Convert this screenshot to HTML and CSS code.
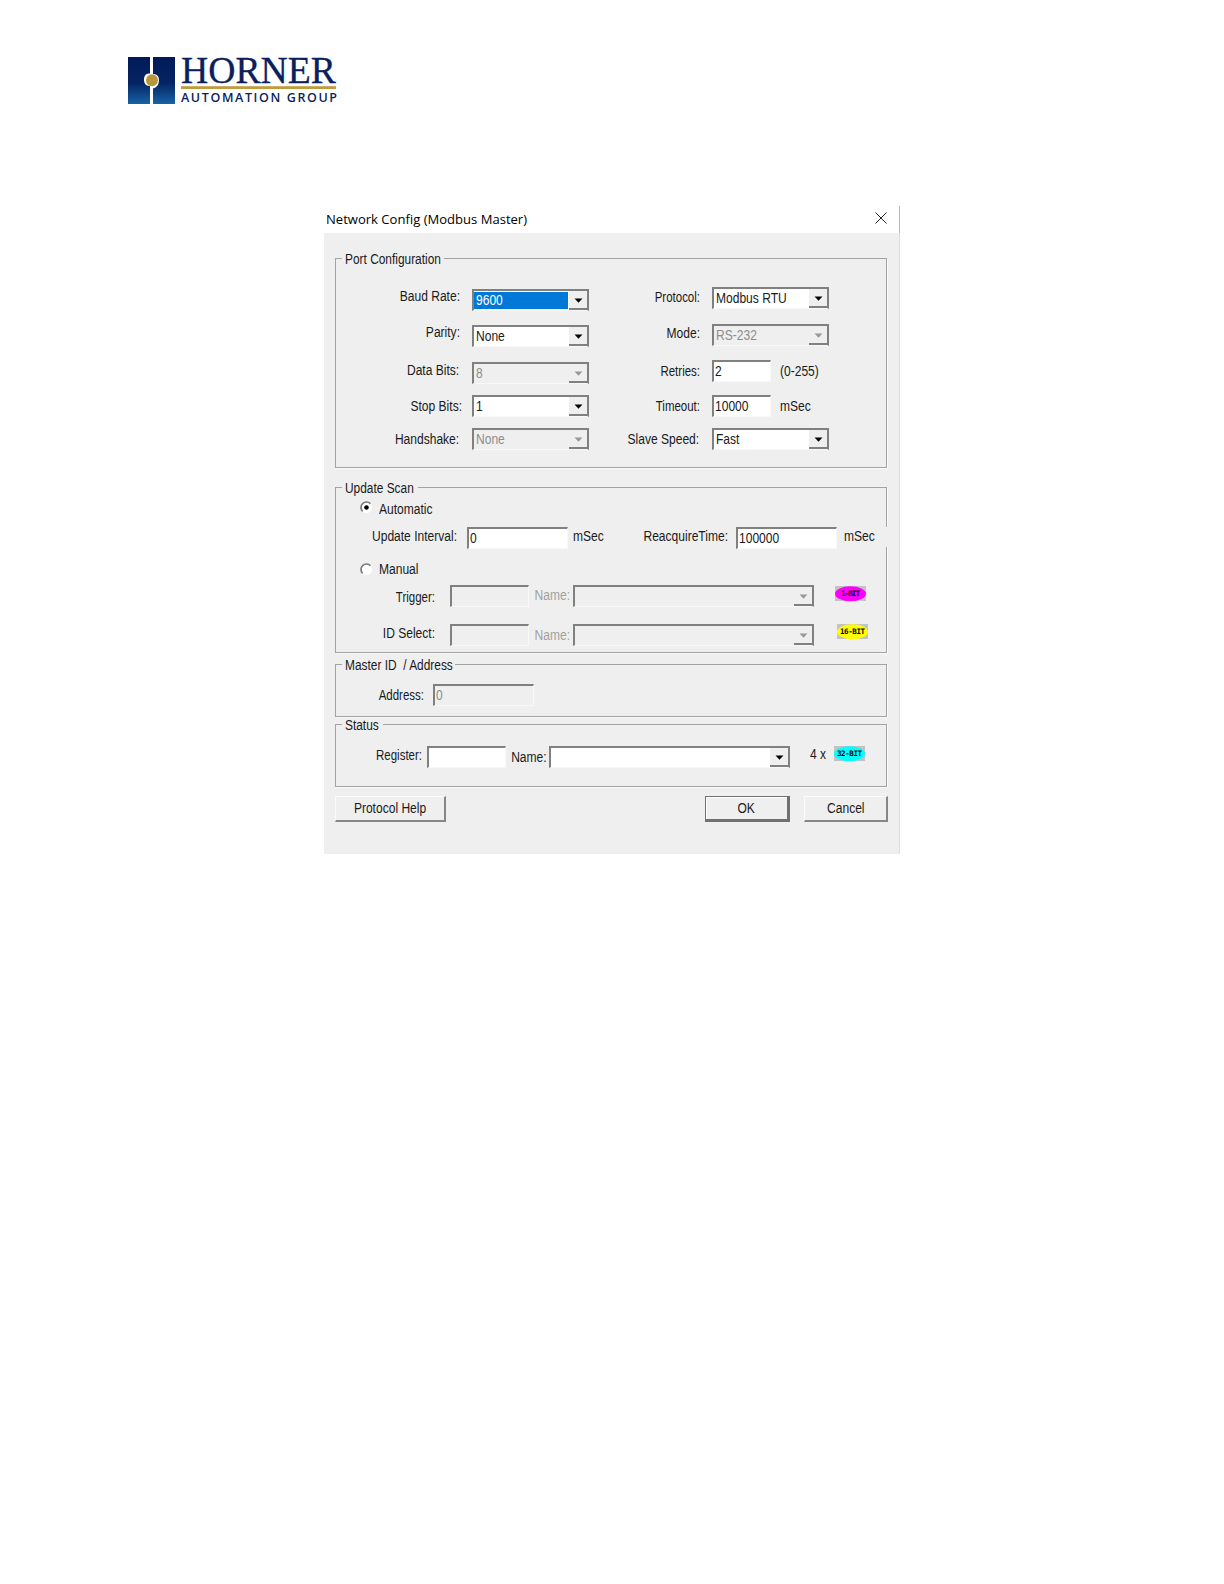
FILE: index.html
```
<!DOCTYPE html>
<html lang="en">

<head>
  <meta charset="UTF-8" />
  <meta name="viewport" content="width=device-width, initial-scale=1.0" />
  <title>Network Config (Modbus Master)</title>
  <link rel="stylesheet" href="styles.css">
</head>

<body>
  <svg width="0" height="0" class="defs">
    <symbol id="arrow" viewBox="0 0 9 5"><path d="M0.5 0.5h8L4.5 4.8z" fill="currentColor" /></symbol>
  </svg>

  <header class="page-header">
    <svg class="logo" viewBox="0 -10 212 60" width="212" height="60">
      <defs>
        <linearGradient id="navy" x1="0" y1="0" x2="0" y2="1">
          <stop offset="0" stop-color="#001a58" />
          <stop offset="0.55" stop-color="#052463" />
          <stop offset="1" stop-color="#1763a6" />
        </linearGradient>
      </defs>
      <rect x="0" y="0" width="22" height="47" fill="url(#navy)" />
      <rect x="25" y="0" width="22" height="47" fill="url(#navy)" />
      <path d="M20 16.5Q15.5 18 16 23.5T22 29V16.5z" fill="#fff" />
      <path d="M26 17Q31.5 18 31 24T25 31.5V17z" fill="#fff" />
      <circle cx="24" cy="23.2" r="6" fill="#b8963e" />
      <text x="53" y="25.8" textLength="155" lengthAdjust="spacingAndGlyphs" class="logo-name">HORNER</text>
      <rect x="53" y="29.2" width="155" height="2.8" fill="#c09c3f" />
      <text x="53" y="45" textLength="156" class="logo-sub">AUTOMATION GROUP</text>
    </svg>
  </header>

  <main class="dialog">
    <div class="title-bar">
      <span class="title">Network Config (Modbus Master)</span>
      <svg class="close" width="12" height="12" viewBox="0 0 12 12"><path d="M0.5 0.5l11 11M11.5 0.5l-11 11" stroke="#222" stroke-width="1" /></svg>
    </div>

    <div class="dialog-body">
      <fieldset class="group port">
        <legend class="legend-port"><span class="text">Port Configuration</span></legend>
        <div class="port-left">
          <div class="row h36"><label class="label up4">Baud Rate:</label>
            <div class="select"><span class="value selected"><span class="text">9600</span></span><span class="drop"><svg><use href="#arrow" /></svg></span></div>
          </div>
          <div class="row h37"><label class="label up4">Parity:</label>
            <div class="select"><span class="value"><span class="text">None</span></span><span class="drop"><svg><use href="#arrow" /></svg></span></div>
          </div>
          <div class="row h33"><label class="label up3 in">Data Bits:</label>
            <div class="select disabled"><span class="value"><span class="text">8</span></span><span class="drop"><svg><use href="#arrow" /></svg></span></div>
          </div>
          <div class="row h33"><label class="label out">Stop Bits:</label>
            <div class="select"><span class="value"><span class="text">1</span></span><span class="drop"><svg><use href="#arrow" /></svg></span></div>
          </div>
          <div class="row"><label class="label in">Handshake:</label>
            <div class="select disabled"><span class="value"><span class="text">None</span></span><span class="drop"><svg><use href="#arrow" /></svg></span></div>
          </div>
        </div>
        <div class="port-right">
          <div class="row h37"><label class="label up1 narrow">Protocol:</label>
            <div class="select"><span class="value"><span class="text">Modbus RTU</span></span><span class="drop"><svg><use href="#arrow" /></svg></span></div>
          </div>
          <div class="row h36"><label class="label up2">Mode:</label>
            <div class="select disabled"><span class="value"><span class="text">RS-232</span></span><span class="drop"><svg><use href="#arrow" /></svg></span></div>
          </div>
          <div class="row h35"><label class="label narrow">Retries:</label>
            <div class="input short"><span class="text">2</span></div><span class="text unit">(0-255)</span>
          </div>
          <div class="row h33"><label class="label narrow">Timeout:</label>
            <div class="input short"><span class="text">10000</span></div><span class="text unit">mSec</span>
          </div>
          <div class="row"><label class="label in">Slave Speed:</label>
            <div class="select"><span class="value"><span class="text">Fast</span></span><span class="drop"><svg><use href="#arrow" /></svg></span></div>
          </div>
        </div>
      </fieldset>

      <fieldset class="group scan">
        <legend class="legend-scan"><span class="text">Update Scan</span></legend>
        <div class="row radio-row h31">
          <svg class="radio" viewBox="0 0 13 13"><circle cx="6.5" cy="6.5" r="5.5" fill="#fff" /><path d="M2.6 10.4A5.5 5.5 0 0 1 10.4 2.6" fill="none" stroke="#777" stroke-width="1.6" /><circle cx="6.5" cy="6.5" r="2.3" fill="#000" /></svg>
          <span class="text down2">Automatic</span>
        </div>
        <div class="row h31 interval">
          <label class="label up2">Update Interval:</label>
          <div class="input medium"><span class="text">0</span></div>
          <span class="text up2 unit-ms">mSec</span>
          <label class="label up2 reacquire">ReacquireTime:</label>
          <div class="input medium"><span class="text">100000</span></div>
          <div class="unit-end"><span class="text">mSec</span></div>
        </div>
        <div class="row radio-row h27">
          <svg class="radio" viewBox="0 0 13 13"><circle cx="6.5" cy="6.5" r="5.5" fill="#fff" /><path d="M2.6 10.4A5.5 5.5 0 0 1 10.4 2.6" fill="none" stroke="#777" stroke-width="1.6" /></svg>
          <span class="text">Manual</span>
        </div>
        <div class="row h39 trigger">
          <label class="label down1 narrow">Trigger:</label>
          <div class="input reg disabled"></div>
          <label class="label name up1 muted">Name:</label>
          <div class="select wide disabled"><span class="value"></span><span class="drop"><svg><use href="#arrow" /></svg></span></div>
          <svg class="badge bit1" viewBox="0 0 31 16"><rect width="31" height="15" fill="#c3c3c3" /><ellipse cx="15.5" cy="7.7" rx="15.5" ry="7.5" fill="#ff00ff" /><text x="6" y="10.3" textLength="19">1-BIT</text></svg>
        </div>
        <div class="row trigger">
          <label class="label up2">ID Select:</label>
          <div class="input reg disabled"></div>
          <label class="label name muted">Name:</label>
          <div class="select wide disabled"><span class="value"></span><span class="drop"><svg><use href="#arrow" /></svg></span></div>
          <svg class="badge bit16" viewBox="0 0 31 16"><rect width="31" height="15" fill="#c3c3c3" /><ellipse cx="15.5" cy="7.7" rx="15.5" ry="7.5" fill="#ffff00" /><text x="3" y="10.3" textLength="25">16-BIT</text></svg>
        </div>
      </fieldset>

      <fieldset class="group master">
        <legend class="legend-master"><span class="text">Master ID&nbsp; / Address</span></legend>
        <div class="row address">
          <label class="label narrow">Address:</label>
          <div class="input medium disabled"><span class="text">0</span></div>
        </div>
      </fieldset>

      <fieldset class="group status">
        <legend class="legend-status"><span class="text">Status</span></legend>
        <div class="row register">
          <label class="label up2 narrow">Register:</label>
          <div class="input reg"></div>
          <label class="label name">Name:</label>
          <div class="select wide"><span class="value"></span><span class="drop"><svg><use href="#arrow" /></svg></span></div>
          <span class="text times">4 x</span>
          <svg class="badge bit32" viewBox="0 0 31 16"><rect width="31" height="15" fill="#c3c3c3" /><ellipse cx="15.5" cy="7.7" rx="15.5" ry="7.5" fill="#00ffff" /><text x="3" y="10.3" textLength="25">32-BIT</text></svg>
        </div>
      </fieldset>

      <div class="buttons">
        <button class="btn help"><span>Protocol Help</span></button>
        <button class="btn ok"><span>OK</span></button>
        <button class="btn cancel"><span>Cancel</span></button>
      </div>
    </div>
  </main>
</body>

</html>
```
FILE: styles.css
```
* {
  box-sizing: border-box;
}

body {
  margin: 0;
  min-height: 1584px;
  background: #fff;
  font-family: "Liberation Sans", Arial, sans-serif;
  font-size: 14px;
  color: #1a1a1a;
}

.defs {
  display: block;
}

.page-header {
  height: 206px;
  padding: 47px 0 0 128px;
}

.logo {
  display: block;
  overflow: visible;
}

.logo-name {
  font-family: "Liberation Serif", serif;
  font-size: 37px;
  fill: #0a1f5c;
  stroke: #0a1f5c;
  stroke-width: 0.3px;
}

.logo-sub {
  font-family: "Open Sans", sans-serif;
  font-size: 12.5px;
  font-weight: 600;
  fill: #0a1f5c;
}

.dialog {
  width: 576px;
  height: 648px;
  margin-left: 324px;
  background: #efefef;
  border-right: 1px solid #dcdfe2;
}

.title-bar {
  display: flex;
  justify-content: space-between;
  height: 27px;
  padding: 0 12px 0 2px;
  background: #fff;
  border-right: 1px solid #9fc0d4;
  margin-right: -1px;
}

.title {
  font-family: "Open Sans", "Noto Sans", sans-serif;
  font-size: 13.4px;
  line-height: 27px;
  color: #000;
  white-space: nowrap;
  transform: scaleX(0.975);
  transform-origin: left;
}

.close {
  margin-top: 6px;
}

.dialog-body {
  padding: 17px 11px 0;
}

.group {
  width: 552px;
  min-width: 0;
  margin: 0;
  padding: 0;
  border: 1px solid #a3a3a3;
  box-shadow: 1px 1px 0 #fafafa;
}

.group legend {
  height: 17px;
  margin-left: 6px;
  padding: 0 0 0 3px;
  line-height: 18px;
}

/* narrow dialog lettering */
.text,
.label {
  display: inline-block;
  white-space: pre;
  transform: scaleX(0.86);
  transform-origin: left;
}

.group legend .text {
  transform: scaleX(0.85);
}

.label {
  flex: none;
  text-align: right;
  transform-origin: right;
}

.label.narrow {
  transform: scaleX(0.82);
}

.row {
  display: flex;
  align-items: flex-start;
  height: 22px;
  line-height: 22px;
}

.h27 { height: 27px; }
.h31 { height: 31px; }
.h33 { height: 33px; }
.h35 { height: 35px; }
.h36 { height: 36px; }
.h37 { height: 37px; }
.h39 { height: 39px; }

.up1 { margin-top: -1px; }
.up2 { margin-top: -2px; }
.up3 { margin-top: -3px; }
.up4 { margin-top: -4px; }
.down1 { margin-top: 1px; }
.down2 { margin-top: 2px; }

/* sunken fields */
.input,
.select {
  flex: none;
  display: flex;
  height: 22px;
  background: #fff;
  border: 2px solid #808080;
  border-right: 1px solid #f8f8f8;
  border-bottom: 1px solid #f8f8f8;
}

.input {
  padding-left: 1px;
  line-height: 19px;
}

.select {
  width: 117px;
  border-right: 2px solid #808080;
}

.value {
  flex: 1;
  padding-left: 2px;
  line-height: 19px;
}

.selected {
  margin: 1px 1px 1px 0;
  line-height: 17px;
  background: #0078d7;
  color: #fff;
}

.drop {
  display: flex;
  width: 18px;
  height: 19px;
  align-items: center;
  justify-content: center;
  background: #efefef;
  border-bottom: 2px solid #808080;
  color: #000;
}

.drop svg {
  width: 9px;
  height: 5px;
  margin-top: 2px;
}

.disabled {
  background: #efefef;
  color: #8d8d8d;
}

.disabled .drop {
  color: #989898;
}

.muted {
  color: #a0a0a0;
}

.short { width: 59px; }
.medium { width: 101px; }
.reg { width: 79px; }
.wide { width: 241px; }

/* port configuration */
.port {
  height: 218px;
}

.legend-port { width: 102px; }

.port-left {
  float: left;
  width: 264px;
  padding-top: 22px;
}

.port-left .label {
  width: 124px;
  margin-right: 12px;
}

.port-right {
  float: left;
  width: 280px;
  padding-top: 20px;
}

.port-right .label {
  width: 100px;
  margin-right: 12px;
}

.port .in {
  padding-right: 1px;
}

.port-left .out {
  width: 126px;
  margin-right: 10px;
}

.unit {
  margin-left: 9px;
}

/* update scan */
.scan {
  height: 174px;
  margin-top: 11px;
}

.legend-scan { width: 76px; }

.radio-row {
  padding-left: 24px;
}

.radio {
  width: 13px;
  height: 13px;
  margin: 5px 6px 0 0;
}

.interval .label {
  width: 121px;
  margin-right: 10px;
}

.interval .unit-ms {
  width: 36px;
  margin-left: 5px;
}

.interval .reacquire {
  width: 119px;
  margin-right: 8px;
}

.unit-end {
  flex: none;
  width: 46px;
  height: 20px;
  margin-left: 7px;
  line-height: 18px;
  background: #efefef;
}

.trigger .label {
  width: 99px;
  margin-right: 15px;
}

.row .name.label {
  width: 40px;
  margin-right: 4px;
}

.badge {
  flex: none;
  width: 31px;
  height: 16px;
  font-family: "DejaVu Sans Mono", monospace;
  font-size: 7.5px;
  font-weight: bold;
}

.bit1 { margin: 1px 0 0 21px; }
.bit16 { margin: 0 0 0 23px; }
.bit32 { margin-left: 7px; }

/* master id */
.master {
  height: 61px;
  margin-top: 3px;
}

.legend-master { width: 113px; }

.address {
  margin-top: 11px;
}

.address .label {
  width: 88px;
  margin-right: 9px;
}

/* status */
.status {
  height: 71px;
  margin-top: -1px;
}

.legend-status { width: 41px; }

.register {
  margin-top: 13px;
}

.register .label {
  width: 86px;
  margin-right: 5px;
}

.register .name.label {
  width: 37px;
  margin-right: 6px;
}

.times {
  width: 17px;
  margin: -3px 0 0 20px;
}

.buttons {
  display: flex;
  width: 553px;
  margin-top: 9px;
}

.btn {
  height: 26px;
  padding: 0;
  font: inherit;
  line-height: 21px;
  color: #1a1a1a;
  background: #efefef;
  border: 1px solid #fbfbfb;
  border-right: 2px solid #868686;
  border-bottom: 2px solid #868686;
}

.btn span {
  display: inline-block;
  transform: scaleX(0.86);
}

.help { width: 111px; }

.ok {
  width: 85px;
  margin-left: auto;
  border: 1px solid #707070;
  border-right-width: 3px;
  border-bottom-width: 3px;
  box-shadow: inset 1px 1px 0 #fff;
}

.cancel {
  width: 84px;
  margin-left: 14px;
}
```
